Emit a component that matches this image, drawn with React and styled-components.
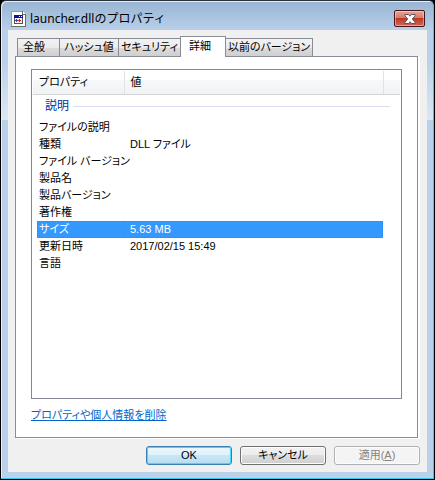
import React from 'react'
import styled, { createGlobalStyle } from 'styled-components'

const GlobalStyle = createGlobalStyle`
  * {
    box-sizing: border-box;
  }

  body {
    margin: 0;
    background: #000;
    color: #000;
    font-family: "Liberation Sans", "Noto Sans CJK JP", sans-serif;
    font-size: 11px;
    line-height: 17px;
    font-feature-settings: "palt";
  }

  button {
    font: inherit;
    font-feature-settings: inherit;
    color: inherit;
  }
`;

const tabs = ['全般', 'ハッシュ値', 'セキュリティ', '詳細', '以前のバージョン']

const rows = [
  { name: 'ファイルの説明', value: '' },
  { name: '種類', value: 'DLL ファイル' },
  { name: 'ファイル バージョン', value: '' },
  { name: '製品名', value: '' },
  { name: '製品バージョン', value: '' },
  { name: '著作権', value: '' },
  { name: 'サイズ', value: '5.63 MB' },
  { name: '更新日時', value: '2017/02/15 15:49' },
  { name: '言語', value: '' },
]

const FileIcon = () => (
  <svg width="15" height="16" viewBox="0 0 15 16" shapeRendering="crispEdges" aria-hidden="true">
    <path d="M1 0H11L14 3V15H1Z" fill="#fff" />
    <path d="M1 0H11V1H1ZM0 0H1V16H0Z" fill="#9a9a90" />
    <path d="M14 3H15V16H14ZM0 15H15V16H0ZM11 0H12V3H14V4H11Z" fill="#6b6b63" />
    <path d="M3 5H12V13H3Z" fill="#f4f4f4" />
    <path d="M3 4H12V7H3Z" fill="#10109c" />
    <path d="M8 5H9V6H8ZM10 5H11V6H10Z" fill="#fff" />
    <path d="M3 7H4V13H3ZM11 7H12V13H11ZM3 12H12V13H3Z" fill="#555" />
    <path d="M5 8H6V9H7V10H6V11H5V10H4V9H5Z" fill="#1848d0" />
    <path d="M8 8H9V9H10V10H9V11H8V10H7V9H8Z" fill="#d02020" />
  </svg>
)

const CloseIcon = () => (
  <svg width="12" height="10" viewBox="0 0 12 10" aria-hidden="true">
    <path
      d="M1 .5H4.5L6 2.2L7.5 .5H11V1.8L8.3 5L11 8.2V9.5H7.5L6 7.8L4.5 9.5H1V8.2L3.7 5L1 1.8Z"
      fill="#fff"
      stroke="#535666"
      strokeWidth="1"
      strokeLinejoin="round"
    />
  </svg>
)

const App = () => {
  return (
    <>
      <GlobalStyle />
      <Window>
        <TitleBar>
          <FileIcon />
          <h1>launcher.dllのプロパティ</h1>
          <CloseButton type="button" aria-label="閉じる">
            <CloseIcon />
          </CloseButton>
        </TitleBar>
        <Dialog>
          <TabList role="tablist">
            {tabs.map((tab) => (
              <Tab key={tab} type="button" role="tab" aria-selected={tab === '詳細'} $active={tab === '詳細'}>
                {tab}
              </Tab>
            ))}
          </TabList>
          <Panel role="tabpanel" aria-label="詳細">
            <ListBox>
              <PropertyTable>
                <colgroup>
                  <col className="name" />
                  <col />
                  <col className="rest" />
                </colgroup>
                <thead>
                  <tr>
                    <HeadCell scope="col">プロパティ</HeadCell>
                    <HeadCell scope="col">値</HeadCell>
                    <HeadCell as="td" />
                  </tr>
                </thead>
                <tbody>
                  <tr>
                    <GroupCell colSpan="3" scope="rowgroup">
                      <div>説明</div>
                    </GroupCell>
                  </tr>
                  {rows.map((row) => (
                    <Row key={row.name} $selected={row.name === 'サイズ'}>
                      <th scope="row">
                        <div>{row.name}</div>
                      </th>
                      <td>
                        <div>{row.value}</div>
                      </td>
                      <td />
                    </Row>
                  ))}
                </tbody>
              </PropertyTable>
            </ListBox>
            <RemoveLink href="#remove">プロパティや個人情報を削除</RemoveLink>
          </Panel>
          <Footer>
            <Button type="submit" $primary>OK</Button>
            <Button type="button">キャンセル</Button>
            <Button type="button" disabled>
              適用(<u>A</u>)
            </Button>
          </Footer>
        </Dialog>
      </Window>
    </>
  );
}

const Window = styled.div`
  display: flex;
  flex-direction: column;
  min-height: 100vh;
  padding: 0 7px 7px;
  border: 1px solid #000;
  border-top-color: #28303a;
  border-radius: 6px 6px 0 0;
  background: linear-gradient(#98b4d2, #b9d1ea 30px, #b9d1ea 60px, #dbe7f4 119px, #b9d1ea 119px);
  box-shadow: inset -1px -1px 0 #35c8ea, inset 1px 1px 0 #e4eef8;
`;

const TitleBar = styled.header`
  display: flex;
  align-items: center;
  height: 29px;
  padding: 6px 2px 0 3px;

  h1 {
    flex: 1;
    margin: 0 0 0 4px;
    font-family: "Noto Sans", "Noto Sans CJK JP", sans-serif;
    font-size: 12px;
    font-weight: normal;
    font-feature-settings: normal;
  }
`;

const CloseButton = styled.button`
  display: flex;
  align-items: center;
  justify-content: center;
  width: 31px;
  height: 17px;
  padding: 0;
  border: 1px solid #47141d;
  border-radius: 2px;
  background: linear-gradient(#e6a397, #d6796a 48%, #bc3a24 50%, #cf6a52);
  box-shadow: inset 0 0 0 1px #ffffff66;
`;

const Dialog = styled.main`
  flex: 1;
  display: flex;
  flex-direction: column;
  padding: 6px 7px 7px;
  background: #f0f0f0;
`;

const TabList = styled.div`
  display: flex;
  align-items: flex-end;
  height: 20px;
  padding-left: 2px;
`;

const Tab = styled.button`
  height: ${({ $active }) => ($active ? '21px' : '18px')};
  min-width: ${({ $active }) => ($active ? '46px' : '60px')};
  margin-bottom: ${({ $active }) => ($active ? '-1px' : '0')};
  padding: ${({ $active }) => ($active ? '0 14px 2px 8px' : '0 2px')};
  border: 1px solid #898c95;
  border-bottom: none;
  background: ${({ $active }) => ($active ? '#fff' : 'linear-gradient(#f2f2f2, #ebebeb 50%, #dddddd 50%, #cfcfcf)')};
  white-space: nowrap;
  z-index: ${({ $active }) => ($active ? 1 : 0)};

  & + & {
    margin-left: -1px;
  }

  &:first-child {
    min-width: 43px;
    padding: 0 14px 0 5px;
  }

  &:last-child {
    min-width: 88px;
  }
`;

const Panel = styled.section`
  flex: 1;
  display: flex;
  flex-direction: column;
  align-items: flex-start;
  margin-right: 2px;
  padding: 12px 15px 13px;
  border: 1px solid #898c95;
  background: #fff;
  box-shadow: 2px 1px 0 #fff;
`;

const ListBox = styled.div`
  flex: 1;
  width: 100%;
  padding: 1px;
  border: 1px solid #828790;
`;

const PropertyTable = styled.table`
  width: 100%;
  table-layout: fixed;
  border-collapse: collapse;

  .name {
    width: 91px;
  }

  .rest {
    width: 17px;
  }

  th,
  td {
    padding: 0;
    font-weight: normal;
    text-align: left;
    white-space: nowrap;
  }
`;

const HeadCell = styled.th`
  && {
    height: 23px;
    padding-left: 6px;
    border-right: 1px solid #e0e2e5;
    border-bottom: 1px solid #d5d5d5;
    background: linear-gradient(#fff 40%, #f7f8fa 41%, #f1f2f4);
  }

  &&:last-child {
    border-right: none;
  }
`;

const GroupCell = styled.th`
  height: 25px;

  div {
    display: flex;
    align-items: center;
    gap: 4px;
    padding: 0 10px 0 12px;
    color: #003399;
    font-size: 12px;
  }

  div::after {
    content: "";
    flex: 1;
    height: 1px;
    background: #d9dff0;
  }
`;

const Row = styled.tr`
  div {
    height: 17px;
    padding-left: 6px;
    line-height: 15px;
    color: ${({ $selected }) => ($selected ? '#fff' : 'inherit')};
    background: ${({ $selected }) => ($selected ? '#3399ff' : 'none')};
    border: 0 dotted ${({ $selected }) => ($selected ? '#cc6600' : 'transparent')};
    border-width: 1px 0;
  }

  th div {
    margin-left: 4px;
    padding-left: 1px;
    border-left-width: 1px;
  }

  td div {
    border-right-width: 1px;
  }
`;

const RemoveLink = styled.a`
  margin-top: 8px;
  color: #0066cc;
`;

const Footer = styled.footer`
  display: flex;
  justify-content: flex-end;
  gap: 8px;
  padding-top: 8px;
`;

const Button = styled.button`
  width: 86px;
  height: 19px;
  padding: 0;
  border: 1px solid ${({ $primary }) => ($primary ? '#3c7fb1' : '#707070')};
  border-radius: 3px;
  line-height: 17px;
  background: ${({ $primary }) =>
    $primary
      ? 'linear-gradient(#eaf6fc, #dff1fb 50%, #c8e7f6 50%, #b4def2)'
      : 'linear-gradient(#f2f2f2, #ebebeb 50%, #dddddd 50%, #cfcfcf)'};
  box-shadow: inset 0 0 0 1px ${({ $primary }) => ($primary ? '#46d8fb' : '#fcfcfc')};

  &:disabled {
    border-color: #adb2b5;
    background: #f4f4f4;
    color: #838383;
  }
`;

export default App
